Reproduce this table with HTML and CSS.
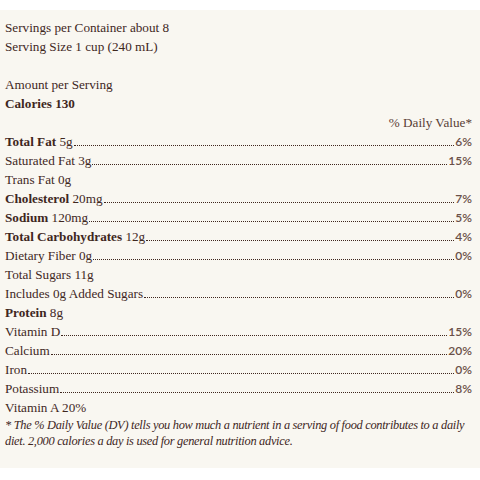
FILE: index.html
```html
<!DOCTYPE html>
<html lang="en">
<head>
<meta charset="utf-8">
<title>Nutrition Facts</title>
<link rel="stylesheet" href="styles.css">
</head>
<body>
<section class="label">
  <p class="line">Servings per Container about 8</p>
  <p class="line">Serving Size 1 cup (240 mL)</p>
  <p class="line gap">Amount per Serving</p>
  <p class="line"><b>Calories 130</b></p>
  <p class="line dv-head">% Daily Value*</p>
  <div class="row"><span class="name"><b>Total Fat</b> 5g</span><span class="dots"></span><span class="pct">6%</span></div>
  <div class="row"><span class="name">Saturated Fat 3g</span><span class="dots"></span><span class="pct">15%</span></div>
  <p class="line">Trans Fat 0g</p>
  <div class="row"><span class="name"><b>Cholesterol</b> 20mg</span><span class="dots"></span><span class="pct">7%</span></div>
  <div class="row"><span class="name"><b>Sodium</b> 120mg</span><span class="dots"></span><span class="pct">5%</span></div>
  <div class="row"><span class="name"><b>Total Carbohydrates</b> 12g</span><span class="dots"></span><span class="pct">4%</span></div>
  <div class="row"><span class="name">Dietary Fiber 0g</span><span class="dots"></span><span class="pct">0%</span></div>
  <p class="line">Total Sugars 11g</p>
  <div class="row"><span class="name">Includes 0g Added Sugars</span><span class="dots"></span><span class="pct">0%</span></div>
  <p class="line"><b>Protein</b> 8g</p>
  <div class="row"><span class="name">Vitamin D</span><span class="dots"></span><span class="pct">15%</span></div>
  <div class="row"><span class="name">Calcium</span><span class="dots"></span><span class="pct">20%</span></div>
  <div class="row"><span class="name">Iron</span><span class="dots"></span><span class="pct">0%</span></div>
  <div class="row"><span class="name">Potassium</span><span class="dots"></span><span class="pct">8%</span></div>
  <p class="line">Vitamin A 20%</p>
  <p class="note">* The % Daily Value (DV) tells you how much a nutrient in a serving of food contributes to a daily diet. 2,000 calories a day is used for general nutrition advice.</p>
</section>
</body>
</html>
```
FILE: styles.css
```css
html, body {
  margin: 0;
  padding: 0;
  background: #ffffff;
}
body {
  font-family: "Liberation Serif", "DejaVu Serif", serif;
  font-size: 13.2px;
  color: #3f271e;
}
.label {
  margin-top: 10px;
  height: 458px;
  box-sizing: border-box;
  background: #f9f7f1;
  padding: 8px 8px 0 5px;
}
.line {
  margin: 0;
  line-height: 19px;
}
.gap {
  margin-top: 19px;
}
.dv-head {
  text-align: right;
  color: #5a4036;
}
.row {
  display: flex;
  align-items: baseline;
  line-height: 19px;
}
.name {
  white-space: nowrap;
}
.dots {
  flex: 1;
  border-bottom: 1px dotted #3f271e;
  margin: 0 1px;
}
.pct {
  color: #6a5048;
  font-family: "Lato", "Liberation Sans", sans-serif;
  font-size: 12px;
  font-weight: 600;
}
.note {
  margin: 0;
  font-style: italic;
  font-size: 12.4px;
  letter-spacing: -0.3px;
  line-height: 16px;
}
b {
  font-weight: bold;
}
```
